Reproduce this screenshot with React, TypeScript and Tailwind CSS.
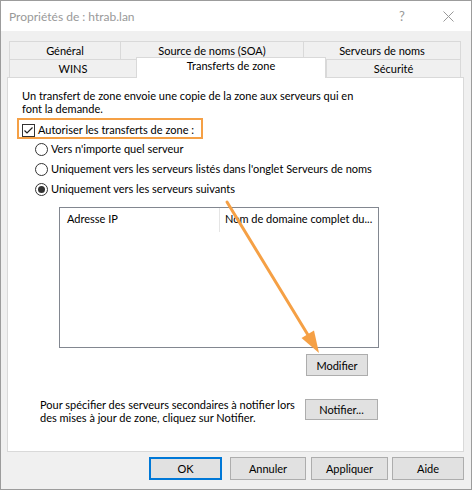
// Zone properties dialog — "Transferts de zone" tab

const ORANGE = "#f5a045"

type Tab = { label: string; w: string; selected?: boolean }

const topRow: Tab[] = [
  { label: "Général", w: "w-[111px]" },
  { label: "Source de noms (SOA)", w: "w-[183px]" },
  { label: "Serveurs de noms", w: "w-[158px]" },
]

const bottomRow: Tab[] = [
  { label: "WINS", w: "w-[127px]" },
  { label: "Transferts de zone", w: "w-[190px]", selected: true },
  { label: "Sécurité", w: "w-[135px]" },
]

function TabButton({ tab, last }: { tab: Tab; last: boolean }) {
  if (tab.selected) {
    return (
      <div
        className={`relative z-10 -mb-[1px] flex h-[21px] justify-center border-x border-t border-[#d9d9d9] bg-white pt-[1px] ${tab.w}`}
      >
        {tab.label}
      </div>
    )
  }
  return (
    <div
      className={`flex h-[18px] items-center justify-center border-l border-t border-[#d9d9d9] ${last ? "border-r" : ""} ${tab.w}`}
    >
      {tab.label}
    </div>
  )
}

function Checkbox() {
  return (
    <span className="flex h-[13px] w-[13px] shrink-0 items-center justify-center border border-[#333] bg-white">
      <svg width="11" height="11" viewBox="0 0 11 11">
        <path d="M1.5 5.5 L4 8 L9.5 2.5" fill="none" stroke="#222" strokeWidth="1.2" />
      </svg>
    </span>
  )
}

function Radio({ checked }: { checked?: boolean }) {
  return (
    <span className="flex h-[13px] w-[13px] shrink-0 items-center justify-center rounded-full border border-[#333] bg-white">
      {checked && <span className="h-[7px] w-[7px] rounded-full bg-[#333]" />}
    </span>
  )
}

function Button({ children, className = "" }: { children: React.ReactNode; className?: string }) {
  return (
    <div
      className={`flex shrink-0 items-center justify-center border border-[#adadad] bg-[#e1e1e1] ${className}`}
    >
      {children}
    </div>
  )
}

export default function App() {
  return (
    <div className="relative h-[490px] w-[472px] border border-[#9c9c9c] bg-[#f0f0f0] font-['Lato',sans-serif] text-[11px] leading-[13px] text-black">
      {/* title bar */}
      <div className="flex h-[30px] items-center bg-white">
        <div className="flex-1 pl-[8px] text-[12px] text-[#999]">Propriétés de : htrab.lan</div>
        <div className="flex h-full w-[46px] items-center justify-center text-[13px] text-[#999]">?</div>
        <div className="flex h-full w-[46px] items-center justify-center">
          <svg width="11" height="11" viewBox="0 0 11 11">
            <path d="M0.5 0.5 L10.5 10.5 M10.5 0.5 L0.5 10.5" stroke="#999" strokeWidth="1" />
          </svg>
        </div>
      </div>

      <div className="pl-[6px] pr-[7px] pt-[10px]">
        {/* tab strip, two rows */}
        <div className="mx-[2px]">
          <div className="flex">
            {topRow.map((t, i) => (
              <TabButton key={t.label} tab={t} last={i === topRow.length - 1} />
            ))}
          </div>
          <div className="flex h-[18px] items-end">
            {bottomRow.map((t, i) => (
              <TabButton key={t.label} tab={t} last={i === bottomRow.length - 1} />
            ))}
          </div>
        </div>

        {/* tab page */}
        <div className="h-[375px] border border-[#d9d9d9] bg-white">
          <p className="ml-[14px] mt-[11px]">
            Un transfert de zone envoie une copie de la zone aux serveurs qui en
            <br />
            font la demande.
          </p>

          <div
            className="ml-[9px] mt-[3px] flex h-[21px] w-[186px] items-start gap-[3px] whitespace-nowrap border-2 pl-[3px]"
            style={{ borderColor: ORANGE }}
          >
            <span className="mt-[4px]">
              <Checkbox />
            </span>
            <span className="mt-[3px]">Autoriser les transferts de zone :</span>
          </div>

          <div className="ml-[27px]">
            {[
              "Vers n'importe quel serveur",
              "Uniquement vers les serveurs listés dans l'onglet Serveurs de noms",
              "Uniquement vers les serveurs suivants",
            ].map((label, i) => (
              <div key={label} className="flex h-[20px] items-center gap-[3px]">
                <Radio checked={i === 2} />
                <span className="-mt-[2px]">{label}</span>
              </div>
            ))}
          </div>

          {/* server list */}
          <div className="ml-[51px] mt-[8px] h-[141px] w-[320px] border border-[#828790] bg-white">
            <div className="flex h-[24px]">
              <div className="w-[159px] pl-[7px] pt-[4px]">Adresse IP</div>
              <div className="w-px bg-[#e5e5e5]" />
              <div className="flex-1 overflow-hidden whitespace-nowrap pl-[5px] pt-[4px]">
                Nom de domaine complet du...
              </div>
            </div>
          </div>

          <Button className="ml-[298px] mt-[6px] h-[22px] w-[62px]">Modifier</Button>

          <div className="ml-[32px] mt-[22px] flex items-start">
            <p className="w-[265px]">
              Pour spécifier des serveurs secondaires à notifier lors
              <br />
              des mises à jour de zone, cliquez sur Notifier.
            </p>
            <Button className="mt-[1px] h-[21px] w-[73px]">Notifier...</Button>
          </div>
        </div>

        {/* dialog buttons */}
        <div className="mt-[5px] flex justify-end">
          <div className="flex h-[23px] w-[73px] items-center justify-center border-2 border-[#0078d7] bg-[#e1e1e1]">
            OK
          </div>
          <Button className="ml-[8px] h-[23px] w-[76px]">Annuler</Button>
          <Button className="ml-[5px] h-[23px] w-[77px]">Appliquer</Button>
          <Button className="ml-[4px] h-[23px] w-[72px]">Aide</Button>
        </div>
      </div>

      {/* annotation arrow */}
      <svg className="pointer-events-none absolute left-0 top-0" width="472" height="490">
        <line x1="226" y1="201" x2="307" y2="334" stroke={ORANGE} strokeWidth="3" strokeLinecap="round" />
        <polygon points="318,352 300.5,337 313,329.5" fill={ORANGE} />
      </svg>
    </div>
  )
}
